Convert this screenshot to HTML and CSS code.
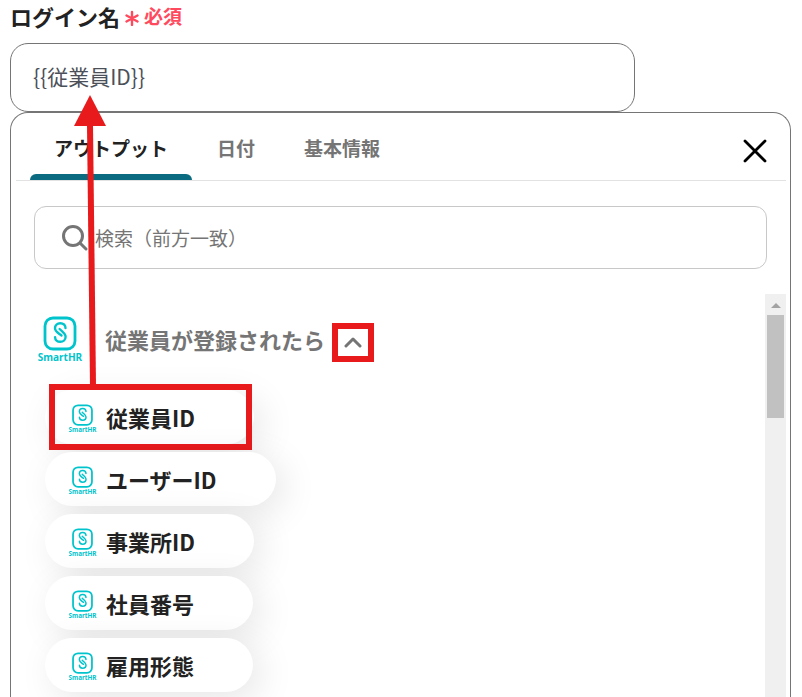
FILE: index.html
```
<!DOCTYPE html>
<html lang="ja">
<head>
    <meta charset="UTF-8">
    <meta name="viewport" content="width=device-width, initial-scale=1.0">
    <title>ログイン名</title>
    <link rel="stylesheet" href="styles.css">
</head>
<body>
    <!-- Logo shared by the group heading and the items -->
    <svg class="defs" aria-hidden="true">
        <symbol id="smarthr" viewBox="0 0 46 46">
            <rect x="8" y="2" width="30" height="31" rx="8" fill="none" stroke="#00c4cc" stroke-width="2.8"/>
            <path d="M28.500 12C28.500 9 26.300 7.200 23.300 7.200S18 9.300 18 12.300C18 15.500 20.500 16.500 24.500 19.500M18.100 21.200C18.100 24 20.300 25.800 23.300 25.800S28.600 23.700 28.600 20.700C28.600 17.500 26.100 16.500 22.600 13" fill="none" stroke="#00c4cc" stroke-width="2.400" stroke-linecap="round"/>
            <text x="23" y="45" text-anchor="middle" class="logo-text">SmartHR</text>
        </symbol>
    </svg>

    <main class="page">
        <label class="field-label" for="loginName">
            ログイン名
            <span class="required">
                <svg width="14" height="16" viewBox="0 0 14 16" aria-hidden="true">
                    <path d="M7 2v13M1.500 5.500l11 6M12.500 5.500l-11 6" stroke="#ff4a5e" stroke-width="2.400" stroke-linecap="round"/>
                </svg>
                必須
            </span>
        </label>
        <input class="field-input" type="text" id="loginName" value="{{従業員ID}}">

        <section class="panel">
            <div class="panel-header">
                <div class="tabs">
                    <button type="button" class="tab active">アウトプット</button>
                    <button type="button" class="tab">日付</button>
                    <button type="button" class="tab">基本情報</button>
                </div>
                <button type="button" class="close-btn" aria-label="閉じる">
                    <svg width="24" height="24" viewBox="0 0 24 24">
                        <path d="M2 2l20 20M22 2L2 22" stroke="#000" stroke-width="2.800" stroke-linecap="round"/>
                    </svg>
                </button>
            </div>

            <div class="search">
                <svg width="26" height="26" viewBox="0 0 26 26" aria-hidden="true">
                    <circle cx="11" cy="11" r="9.500" fill="none" stroke="#757575" stroke-width="3"/>
                    <path d="M18 18l6 6" stroke="#757575" stroke-width="3" stroke-linecap="round"/>
                </svg>
                <input type="text" placeholder="検索（前方一致）" aria-label="検索">
            </div>

            <div class="results">
                <div class="results-body">
                    <div class="group">
                        <svg class="group-logo"><use href="#smarthr"/></svg>
                        <h2>従業員が登録されたら</h2>
                        <button type="button" class="toggle" aria-label="折りたたむ">
                            <svg width="18" height="12" viewBox="0 0 18 12">
                                <path d="M2 10l7-7 7 7" fill="none" stroke="#757575" stroke-width="3" stroke-linecap="round" stroke-linejoin="round"/>
                            </svg>
                        </button>
                    </div>
                    <div class="items">
                        <button type="button" class="item marked"><svg><use href="#smarthr"/></svg>従業員ID</button>
                        <button type="button" class="item"><svg><use href="#smarthr"/></svg>ユーザーID</button>
                        <button type="button" class="item"><svg><use href="#smarthr"/></svg>事業所ID</button>
                        <button type="button" class="item"><svg><use href="#smarthr"/></svg>社員番号</button>
                        <button type="button" class="item"><svg><use href="#smarthr"/></svg>雇用形態</button>
                    </div>
                </div>
                <div class="scrollbar">
                    <svg width="10" height="5" viewBox="0 0 10 5"><path d="M0 5l5-5 5 5z" fill="#a3a3a3"/></svg>
                    <div class="thumb"></div>
                </div>
            </div>
        </section>

        <!-- Arrow from the marked item up to the login name field -->
        <svg class="arrow" width="34" height="292" viewBox="0 0 34 292" aria-hidden="true">
            <path d="M16 30L19 291" stroke="#e81a1c" stroke-width="6"/>
            <path d="M16 0L32 31H0z" fill="#e81a1c"/>
        </svg>
    </main>
</body>
</html>
```
FILE: styles.css
```
* {
    margin: 0;
    padding: 0;
    box-sizing: border-box;
    font-family: 'Noto Sans CJK JP', sans-serif;
}

body {
    background: #fff;
    color: #222;
}

button {
    border: none;
    background: none;
    cursor: pointer;
}

.defs {
    display: none;
}

.logo-text {
    font-family: 'Noto Sans', sans-serif;
    font-size: 10px;
    font-weight: 700;
    fill: #00c4cc;
}

.page {
    position: relative;
    display: flex;
    flex-direction: column;
    height: 100vh;
    padding: 0 11px 0 10px;
    overflow: hidden;
}

.field-label {
    display: flex;
    flex: none;
    align-items: center;
    gap: 5px;
    margin-bottom: 11px;
    font-size: 22px;
    font-weight: 700;
    line-height: 32px;
}

.required {
    display: flex;
    align-items: center;
    gap: 5px;
    color: #ff4a5e;
    font-size: 19px;
}

.required svg {
    margin-top: 4px;
}

.field-input {
    flex: none;
    width: 80%;
    height: 69px;
    padding: 0 22px 4px;
    border: 1px solid #757575;
    border-radius: 18px;
    color: #4b5058;
    font-size: 21px;
    line-height: 36px;
}

.panel {
    display: flex;
    flex: 1;
    flex-direction: column;
    min-height: 0;
    border: 1px solid #757575;
    border-bottom: none;
    border-radius: 18px 18px 0 0;
}

.panel-header {
    display: flex;
    flex: none;
    align-items: center;
    justify-content: space-between;
    height: 68px;
    margin: 0 4px 0 5px;
    padding: 0 19px 0 14px;
    border-bottom: 1px solid #e2e2e2;
}

.tabs {
    display: flex;
    gap: 1px;
    height: 100%;
}

.tab {
    position: relative;
    padding: 8px 24px 6px;
    color: #757575;
    font-size: 19px;
    font-weight: 700;
}

.tab.active {
    color: #222;
}

.tab.active::after {
    content: '';
    position: absolute;
    left: 0;
    right: 0;
    bottom: 0;
    height: 6px;
    border-radius: 6px 6px 0 0;
    background: #0b6b80;
}

.close-btn {
    display: flex;
    padding-top: 8px;
}

.search {
    display: flex;
    flex: none;
    align-items: center;
    gap: 7px;
    height: 63px;
    margin: 25px 23px;
    padding: 0 27px;
    border: 1px solid #c8c8c8;
    border-radius: 12px;
}

.search input {
    flex: 1;
    border: none;
    outline: none;
    font-size: 19px;
}

.search input::placeholder {
    color: #757575;
}

.results {
    display: flex;
    flex: 1;
    min-height: 0;
    padding-right: 4px;
}

.results-body {
    flex: 1;
    overflow: hidden;
    padding: 22px 0 0 26px;
}

.group {
    display: flex;
    align-items: center;
    height: 46px;
    margin-bottom: 28px;
}

.group-logo {
    width: 46px;
    height: 46px;
    margin-right: 22px;
}

.group h2 {
    color: #757575;
    font-size: 22px;
    font-weight: 700;
}

.toggle {
    display: flex;
    align-items: center;
    justify-content: center;
    width: 42px;
    height: 39px;
    margin-top: 6px;
    margin-left: 7px;
    border: 6px solid #e81a1c;
}

.items {
    display: flex;
    flex-direction: column;
    align-items: flex-start;
    gap: 8px;
    padding-left: 8px;
}

.item {
    position: relative;
    display: flex;
    flex: none;
    align-items: center;
    gap: 9px;
    height: 54px;
    padding: 0 59px 0 23px;
    border-radius: 27px;
    background: #fff;
    box-shadow: 8px 8px 36px rgba(0, 0, 0, 0.1);
    color: #222;
    font-size: 22px;
    font-weight: 700;
}

.item svg {
    width: 29px;
    height: 29px;
    margin-top: 2px;
}

.marked::after {
    content: '';
    position: absolute;
    inset: -6px 2px -6px 4px;
    border: 6px solid #e81a1c;
}

.scrollbar {
    display: flex;
    flex-direction: column;
    align-items: center;
    gap: 7px;
    width: 21px;
    padding-top: 9px;
    background: #f0f0f0;
}

.thumb {
    width: 17px;
    height: 103px;
    background: #c1c1c1;
}

.arrow {
    position: absolute;
    top: 95px;
    left: 74px;
}
```
